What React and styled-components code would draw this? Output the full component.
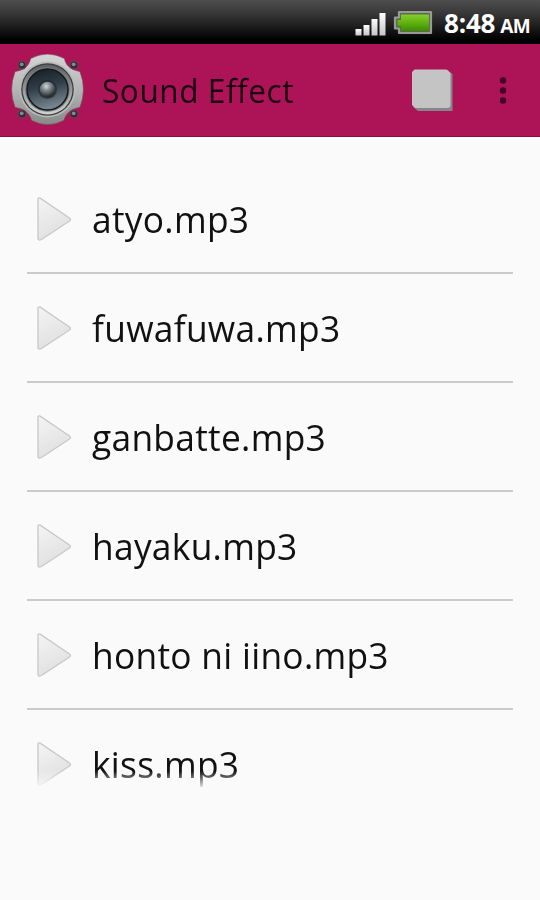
import styled, { createGlobalStyle } from 'styled-components';

const GlobalStyle = createGlobalStyle`
    * {
        box-sizing: border-box;
    }

    body {
        margin: 0;
        background: #fafafa;
        font-family: 'Open Sans', 'Noto Sans', sans-serif;
    }
`;

const Screen = styled.div`
    width: 540px;
    height: 900px;
    overflow: hidden;
    background: #fafafa;
`;

const StatusBar = styled.div`
    display: flex;
    align-items: center;
    justify-content: flex-end;
    height: 44px;
    padding: 0 10px 0 0;
    background: linear-gradient(#4e4e4e 0, #3a3a3a 12px, #222222 24px, #000000 40px);
    color: #ffffff;
`;

const StatusIcon = styled.svg`
    display: block;
    flex: none;
    margin-right: ${(props) => props.$gap}px;
`;

const Clock = styled.div`
    display: flex;
    align-items: baseline;
    width: 86px;
    height: 44px;
    line-height: 46px;
    font-size: 26px;
    font-weight: 700;
    letter-spacing: -0.2px;
    white-space: nowrap;
`;

const Meridiem = styled.span`
    margin-left: 5px;
    font-size: 19px;
    font-weight: 700;
    letter-spacing: -0.6px;
`;

const ActionBar = styled.header`
    display: flex;
    align-items: center;
    height: 93px;
    padding-left: 8px;
    background: #ad1457;
    border-bottom: 1px solid #8f0b45;
`;

const Title = styled.h1`
    flex: 1;
    margin: 1px 0 0 14px;
    color: #1c0312;
    font-size: 33px;
    font-weight: 400;
    line-height: 44px;
    letter-spacing: 0.6px;
    white-space: nowrap;
    transform: scaleX(0.955);
    transform-origin: left;
`;

const IconButton = styled.button`
    display: block;
    width: ${(props) => props.$width}px;
    height: 60px;
    padding: 0;
    border: 0;
    background: none;

    svg {
        display: block;
        margin: 0 auto;
    }
`;

const TrackList = styled.ul`
    height: 652px;
    margin: 0;
    padding: 28px 27px 0;
    overflow: hidden;
    list-style: none;
    mask-image: linear-gradient(#000 634px, transparent 652px);
`;

const Track = styled.li`
    display: flex;
    align-items: center;
    height: 109px;
    padding: 0 0 0 9px;
    border-bottom: 2px solid #cacaca;

    &:last-child {
        border-bottom-color: transparent;
    }
`;

const TrackName = styled.span`
    display: block;
    margin: 1px 0 0 19px;
    color: #111111;
    font-size: 37px;
    line-height: 50px;
    letter-spacing: 0.3px;
    white-space: nowrap;
    transform: scaleX(0.955);
    transform-origin: left;
`;

const tracks = ['atyo.mp3', 'fuwafuwa.mp3', 'ganbatte.mp3', 'hayaku.mp3', 'honto ni iino.mp3', 'kiss.mp3'];

const screws = [
    [14, 15],
    [66, 15],
    [14, 64],
    [66, 64],
];

const SignalIcon = () => (
    <StatusIcon $gap={6} width="32" height="44" viewBox="0 0 32 44">
        <defs>
            <linearGradient id="signal" x1="0" y1="0" x2="0" y2="1">
                <stop offset="0" stopColor="#ffffff" />
                <stop offset="1" stopColor="#c4c4c4" />
            </linearGradient>
        </defs>
        <g fill="url(#signal)">
            <rect x="0.5" y="29" width="6" height="6.5" />
            <rect x="8.5" y="25" width="6" height="10.5" />
            <rect x="16.5" y="19" width="6" height="16.5" />
            <rect x="24.5" y="13" width="6" height="22.5" />
        </g>
    </StatusIcon>
);

const BatteryIcon = () => (
    <StatusIcon $gap={11} width="40" height="44" viewBox="0 0 40 44">
        <defs>
            <linearGradient id="battery" x1="0" y1="0" x2="0" y2="1">
                <stop offset="0" stopColor="#83d02a" />
                <stop offset="0.35" stopColor="#6dbb18" />
                <stop offset="1" stopColor="#3c8d00" />
            </linearGradient>
        </defs>
        <path
            d="M6 12H38V33H6V28.5H2V17.5H6Z"
            fill="#5a6a48"
            stroke="#999999"
            strokeWidth="2.2"
            strokeLinejoin="round"
        />
        <path d="M8 14.5H36V31H8V26H4.5V20H8Z" fill="url(#battery)" />
    </StatusIcon>
);

const SpeakerIcon = () => (
    <svg width="80" height="80" viewBox="0 0 80 80">
        <defs>
            <linearGradient id="plate" x1="0" y1="0" x2="0" y2="1">
                <stop offset="0" stopColor="#d4d5d4" />
                <stop offset="0.5" stopColor="#b4b6b5" />
                <stop offset="1" stopColor="#868988" />
            </linearGradient>
            <linearGradient id="ring" x1="0" y1="0" x2="0" y2="1">
                <stop offset="0" stopColor="#5c5f60" />
                <stop offset="1" stopColor="#d0d2d1" />
            </linearGradient>
            <linearGradient id="cone" x1="0" y1="0" x2="0.25" y2="1">
                <stop offset="0" stopColor="#141b20" />
                <stop offset="0.5" stopColor="#303e48" />
                <stop offset="1" stopColor="#76838c" />
            </linearGradient>
            <radialGradient id="cap" cx="0.42" cy="0.3" r="0.7">
                <stop offset="0" stopColor="#d5d8d9" />
                <stop offset="0.35" stopColor="#8a9195" />
                <stop offset="1" stopColor="#1c2226" />
            </radialGradient>
        </defs>
        <path
            d="M22.5 8.5Q39.5 -0.5 56.5 8.5C57.5 14 61 19.5 72 21.5Q79 39.5 72 57.5C62 59 57.5 64.5 56 70.5Q39.5 79 23.5 70.5C22 64.5 17.5 59 7 57.5Q0 39.5 7 21.5C17.5 20 21.5 14.5 22.5 8.5Z"
            fill="url(#plate)"
            stroke="#7c3656"
            strokeWidth="0.7"
        />
        {screws.map(([x, y]) => (
            <g key={`${x}-${y}`}>
                <circle cx={x} cy={y} r="4.6" fill="#793b55" />
                <circle cx={x} cy={y} r="3.5" fill="#28303a" />
                <circle cx={x - 0.3} cy={y - 0.7} r="1.9" fill="#8c8493" />
            </g>
        ))}
        <circle cx="39.5" cy="39.5" r="28" fill="#b9bbba" />
        <circle cx="39.5" cy="39.5" r="26.3" fill="#3b3e40" />
        <circle cx="39.5" cy="39.5" r="25" fill="url(#ring)" />
        <circle cx="39.5" cy="39.5" r="22.3" fill="#777c7e" />
        <circle cx="39.5" cy="39.5" r="20.5" fill="url(#cone)" stroke="#15191c" strokeWidth="1.5" />
        <circle cx="39.5" cy="39.5" r="9.5" fill="#1b252c" opacity="0.65" />
        <circle cx="39.5" cy="39.5" r="7.8" fill="url(#cap)" />
    </svg>
);

const StopIcon = () => (
    <svg width="44" height="60" viewBox="0 0 44 60">
        <path d="M5 10H36L42.5 14V51H8L3 47Z" fill="#85858b" />
        <path d="M4.5 9.5H36Q37 9.5 38 10.5L40.5 13V45Q40.5 48 37.5 48H5.5L2 45V12Z" fill="#c4c4c4" />
    </svg>
);

const MoreIcon = () => (
    <svg width="10" height="60" viewBox="0 0 10 60">
        <circle cx="5" cy="20.5" r="3.2" fill="#420325" />
        <circle cx="5" cy="30.5" r="3.2" fill="#420325" />
        <circle cx="5" cy="40.5" r="3.2" fill="#420325" />
    </svg>
);

const PlayIcon = () => (
    <svg width="37" height="50" viewBox="0 0 37 50">
        <defs>
            <linearGradient id="play" x1="0" y1="0" x2="0.4" y2="1">
                <stop offset="0" stopColor="#f4f4f4" />
                <stop offset="1" stopColor="#e0e0e0" />
            </linearGradient>
        </defs>
        <path
            d="M2 5Q2 3.5 4.2 4.2L33.5 24Q35.5 25.5 33.5 27L5.5 45.5Q2 47 2 44.5Z"
            fill="url(#play)"
            stroke="#c8c8c8"
            strokeWidth="1.3"
        />
    </svg>
);

const App = () => {
    return (
        <Screen>
            <GlobalStyle />
            <StatusBar>
                <SignalIcon />
                <BatteryIcon />
                <Clock>
                    8:48<Meridiem>AM</Meridiem>
                </Clock>
            </StatusBar>
            <ActionBar>
                <SpeakerIcon />
                <Title>Sound Effect</Title>
                <IconButton $width={66} aria-label="Stop">
                    <StopIcon />
                </IconButton>
                <IconButton $width={75} aria-label="More options">
                    <MoreIcon />
                </IconButton>
            </ActionBar>
            <TrackList>
                {tracks.map((track) => (
                    <Track key={track}>
                        <PlayIcon />
                        <TrackName>{track}</TrackName>
                    </Track>
                ))}
            </TrackList>
        </Screen>
    );
};

export default App;
